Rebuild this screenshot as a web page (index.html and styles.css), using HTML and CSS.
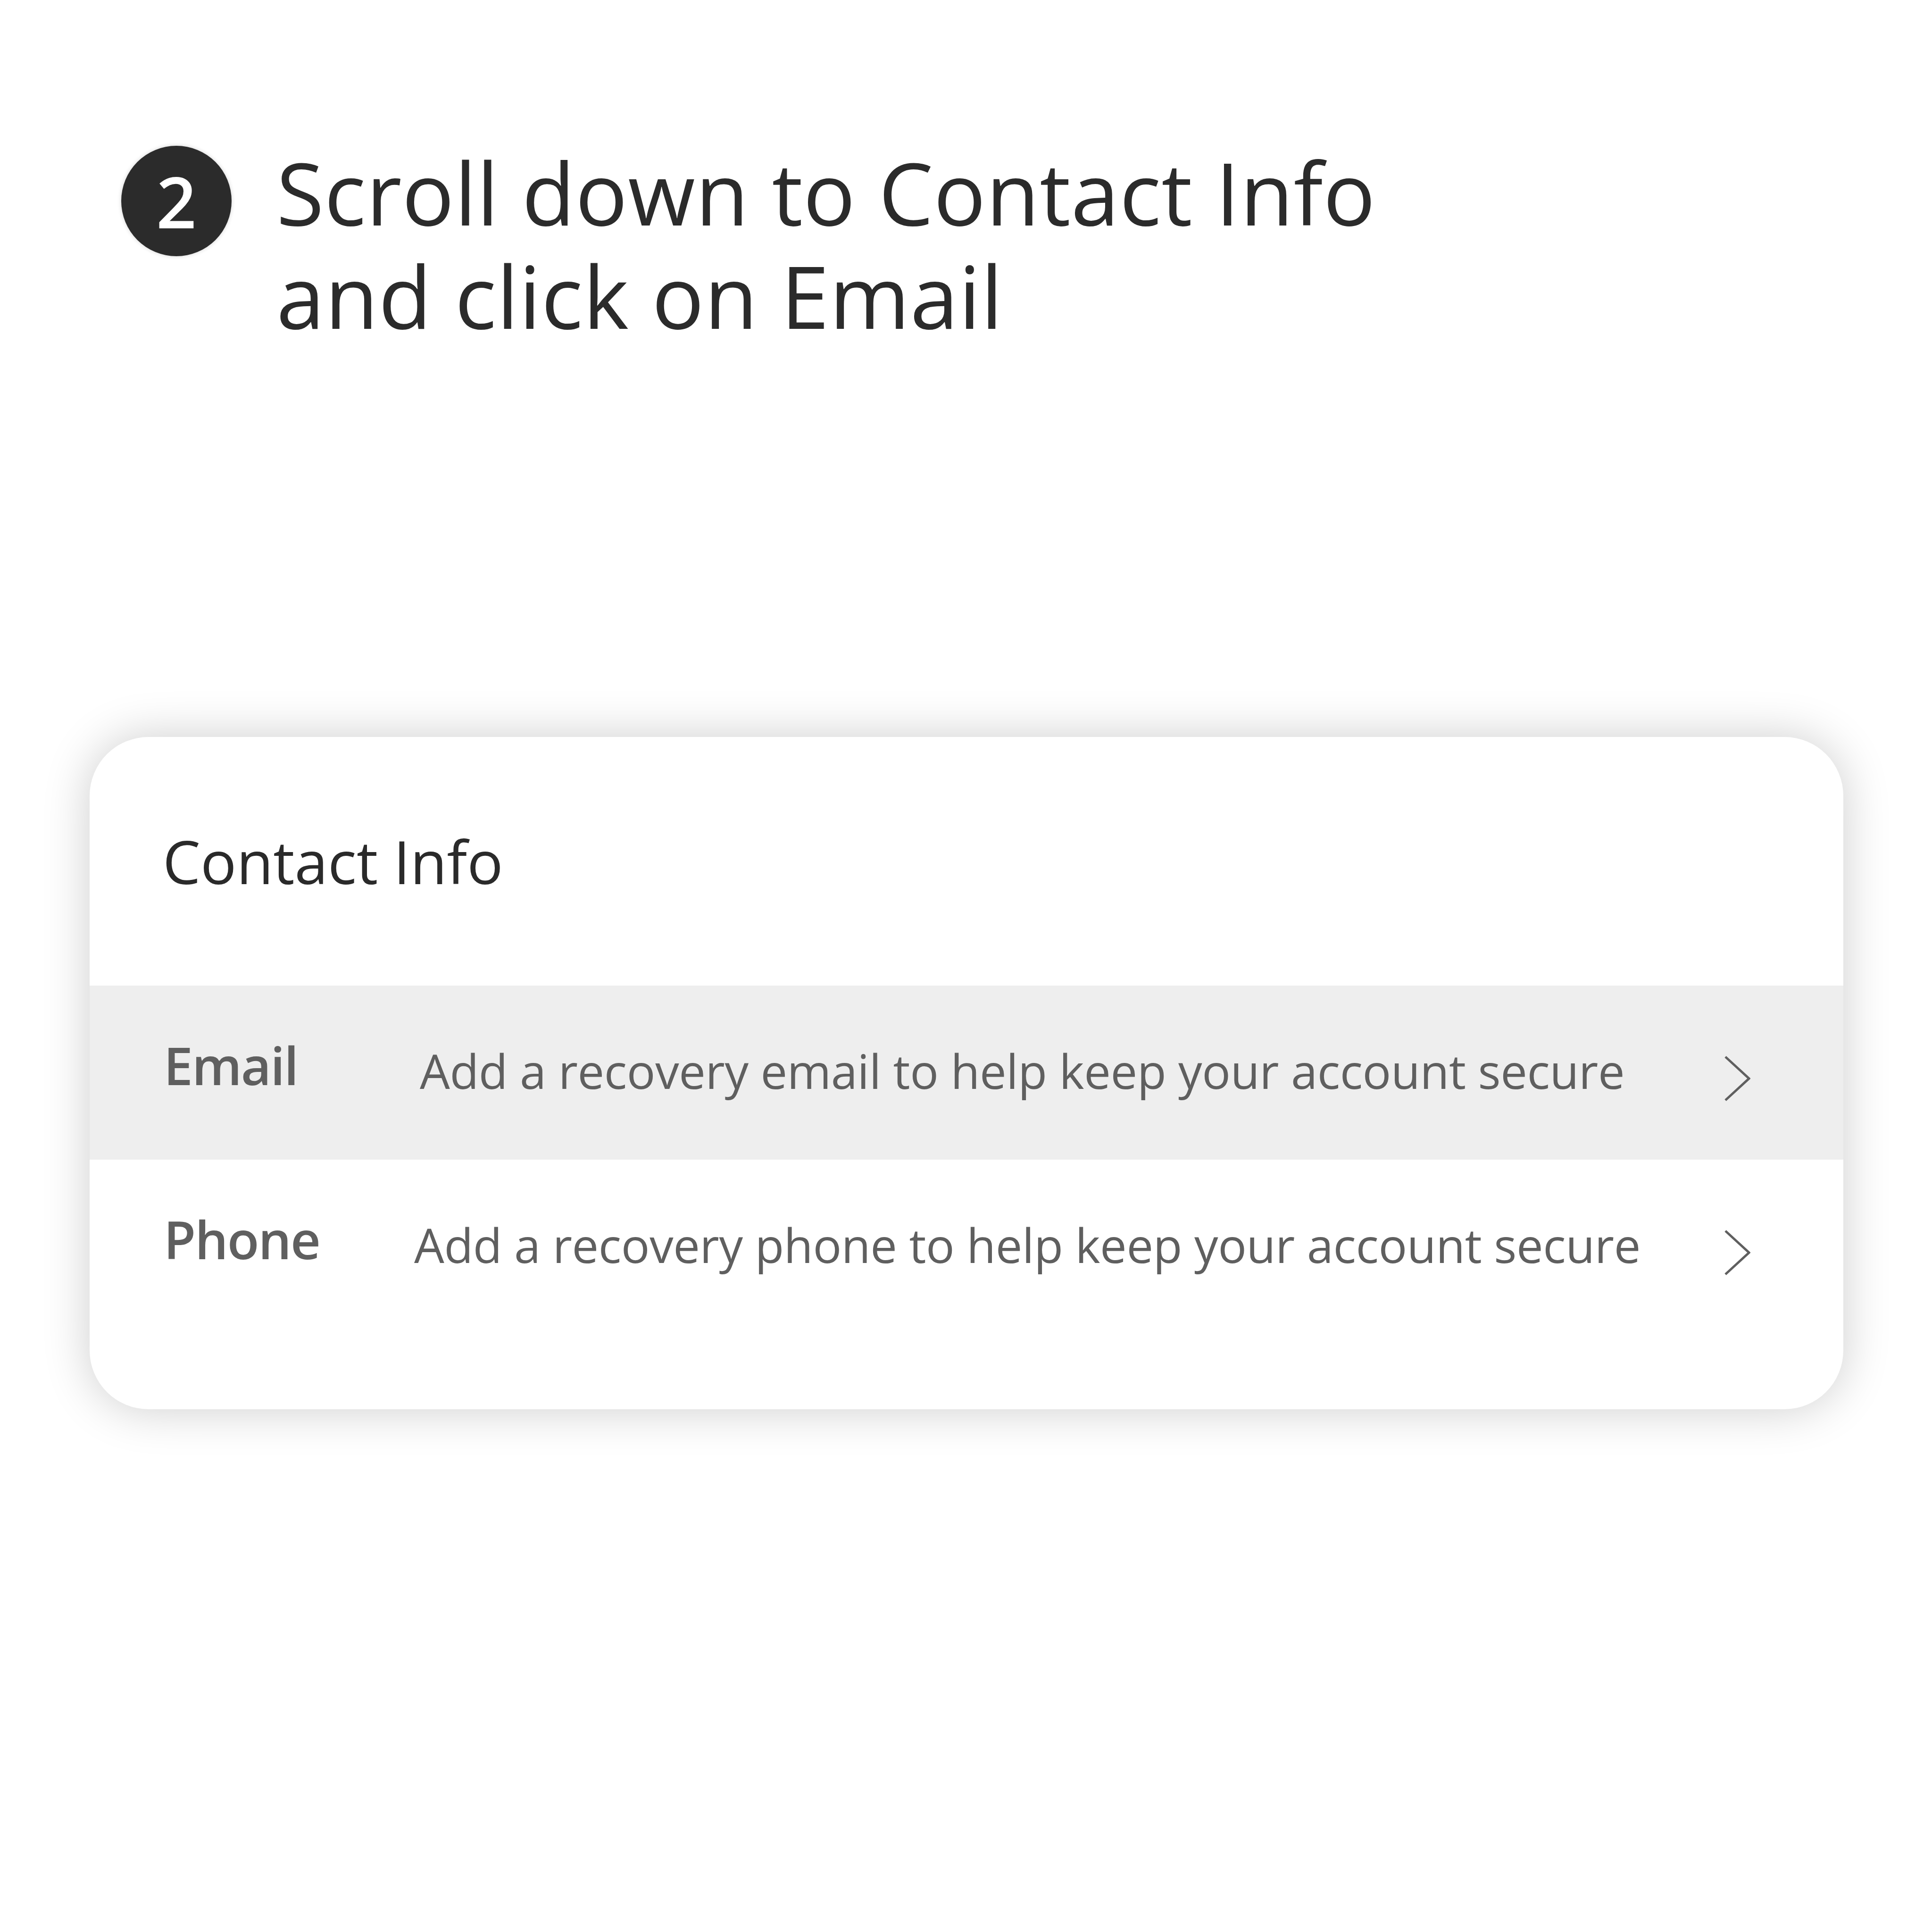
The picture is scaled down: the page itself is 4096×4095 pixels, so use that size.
FILE: index.html
```html
<!DOCTYPE html>
<html lang="en">
<head>
    <meta charset="UTF-8">
    <meta name="viewport" content="width=device-width, initial-scale=1.0">
    <title>Step 2 - Contact Info</title>
    <link rel="stylesheet" href="styles.css">
</head>
<body>
    <div class="step">
        <div class="step-num">2</div>
        <h1 class="step-title">
            <span class="line">Scroll down to Contact Info</span>
            <span class="line">and click on Email</span>
        </h1>
    </div>

    <div class="card">
        <h2 class="card-title">Contact Info</h2>

        <div class="row active">
            <span class="label">Email</span>
            <span class="desc">Add a recovery email to help keep your account secure</span>
            <svg class="chevron" width="56" height="100" viewBox="0 0 56 100">
                <polyline points="3,4 53,50 3,96" />
            </svg>
        </div>

        <div class="row">
            <span class="label">Phone</span>
            <span class="desc desc-phone">Add a recovery phone to help keep your account secure</span>
            <svg class="chevron" width="56" height="100" viewBox="0 0 56 100">
                <polyline points="3,4 53,50 3,96" />
            </svg>
        </div>
    </div>
</body>
</html>
```
FILE: styles.css
```css
body {
    margin: 0;
    padding-bottom: 600px;
    background: #fff;
    font-family: "Open Sans", "Noto Sans", sans-serif;
    color: #2b2b2b;
}

.step {
    display: flex;
    align-items: flex-start;
    gap: 95px;
    padding: 297px 0 0 257px;
}
.step-num {
    flex: none;
    width: 234px;
    height: 234px;
    margin-top: 12px;
    border-radius: 50%;
    background: #2b2b2b;
    box-shadow: 0 0 8px rgba(0,0,0,0.18);
    color: #fff;
    font-size: 150px;
    font-weight: 600;
    display: flex;
    align-items: center;
    justify-content: center;
    line-height: 1;
}
.step-title {
    margin: 0;
    font-size: 184px;
    font-weight: 400;
    line-height: 219px;
    letter-spacing: 0.7px;
    color: #2b2b2b;
}
.step-title .line {
    display: block;
}

.card {
    width: 3718px;
    margin: 827px 0 0 190px;
    padding-bottom: 160px;
    background: #fff;
    border-radius: 125px;
    box-shadow: 0 0 100px rgba(0,0,0,0.2);
}
.card-title {
    margin: 0 0 188px;
    padding: 187px 0 0 155px;
    font-size: 127px;
    font-weight: 400;
    line-height: 152px;
    color: #2a2a2a;
}

.row {
    display: grid;
    grid-template-columns: 543px 1fr auto;
    align-items: start;
    height: 369px;
    padding: 0 197px 0 157px;
    color: #5f5f5f;
}
.row.active {
    background: #eeeeee;
}
.label {
    margin-top: 102px;
    font-size: 111px;
    font-weight: 600;
    line-height: 133px;
    letter-spacing: -2px;
}
.desc {
    margin-top: 120px;
    font-size: 101px;
    line-height: 121px;
    letter-spacing: -0.4px;
}
.desc-phone {
    margin-left: -12px;
}
.chevron {
    margin-top: 147px;
}
.chevron polyline {
    fill: none;
    stroke: #5f5f5f;
    stroke-width: 5;
}
```
